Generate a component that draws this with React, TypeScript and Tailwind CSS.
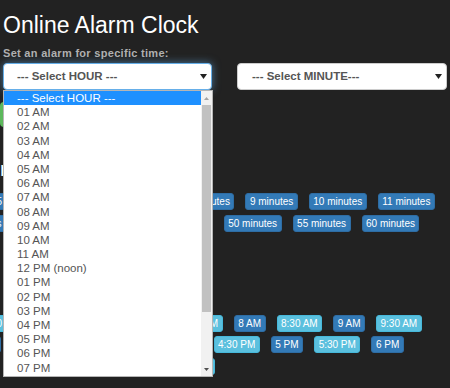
const hours = [
  "01 AM", "02 AM", "03 AM", "04 AM", "05 AM", "06 AM", "07 AM", "08 AM", "09 AM", "10 AM", "11 AM",
  "12 PM (noon)", "01 PM", "02 PM", "03 PM", "04 PM", "05 PM", "06 PM", "07 PM",
];

const minutesRow1 = ["5 minutes", "6 minutes", "7 minutes", "8 minutes", "9 minutes", "10 minutes", "11 minutes"];
const minutesRow2 = ["30 minutes", "35 minutes", "40 minutes", "45 minutes", "50 minutes", "55 minutes", "60 minutes"];
const timesRow1 = ["5:30 AM", "6 AM", "6:30 AM", "7 AM", "7:30 AM", "8 AM", "8:30 AM", "9 AM", "9:30 AM"];
const timesRow2 = ["2 PM", "2:30 PM", "3 PM", "3:30 PM", "4 PM", "4:30 PM", "5 PM", "5:30 PM", "6 PM"];
const timesRow3 = ["9 PM", "9:30 PM", "10 PM", "10:30 PM"];

function Caret() {
  return (
    <svg width="7" height="5" viewBox="0 0 7 5" className="shrink-0">
      <path d="M0 0h7L3.5 5z" fill="#222" />
    </svg>
  );
}

function Btn({ label, light }: { label: string; light?: boolean }) {
  return (
    <span
      className={
        light
          ? "shrink-0 h-[17px] rounded-[3px] border border-[#46b8da] bg-[#5bc0de] px-[3.5px] text-[10px] leading-[15px] text-white whitespace-nowrap"
          : "shrink-0 h-[17px] rounded-[3px] border border-[#2e6da4] bg-[#337ab7] px-[3.5px] text-[10px] leading-[15px] text-white whitespace-nowrap"
      }
    >
      {label}
    </span>
  );
}

function TimeRow({ items, className }: { items: string[]; className: string }) {
  return (
    <div className={"flex gap-[11px] " + className}>
      {items.map((t) => (
        <Btn key={t} label={t} light={t.includes(":30")} />
      ))}
    </div>
  );
}

export default function App() {
  return (
    <div className="h-[388px] w-[450px] overflow-hidden bg-[#222222] px-[3px] font-['Liberation_Sans',Arial,sans-serif]">
      {/* Header */}
      <h1 className="pt-[13px] text-[23px] leading-[25px] text-white">Online Alarm Clock</h1>
      <p className="mt-[8px] text-[11px] font-bold leading-[15px] tracking-[0.3px] text-[#b0b0b0]">
        Set an alarm for specific time:
      </p>

      {/* Selects */}
      <div className="mt-[2px] flex">
        <div className="relative w-[209px]">
          <div className="flex h-[27px] items-center justify-between rounded-[4px] border border-[#66afe9] bg-white pl-[13px] pr-[4px] shadow-[0_0_8px_rgba(102,175,233,0.6)]">
            <span className="text-[11.5px] font-bold text-[#555]">--- Select HOUR ---</span>
            <Caret />
          </div>

          {/* Open option list */}
          <div className="absolute left-0 top-[27px] z-10 flex h-[287px] w-[210px] overflow-hidden border border-[#b5b5b5] bg-white">
            <div className="flex-1">
              <div className="h-[14.2px] bg-[#1e90ff] pl-[13px] text-[11.5px] leading-[14.2px] text-white">
                --- Select HOUR ---
              </div>
              {hours.map((h) => (
                <div key={h} className="h-[14.2px] pl-[13px] text-[11.5px] leading-[14.2px] text-[#555]">
                  {h}
                </div>
              ))}
            </div>
            <div className="flex w-[11px] flex-col bg-[#f1f1f1]">
              <div className="flex h-[14px] items-center justify-center">
                <svg width="5" height="3" viewBox="0 0 5 3">
                  <path d="M0 3h5L2.5 0z" fill="#a3a3a3" />
                </svg>
              </div>
              <div className="mx-px h-[207px] bg-[#c1c1c1]" />
              <div className="flex-1" />
              <div className="flex h-[14px] items-center justify-center">
                <svg width="5" height="3" viewBox="0 0 5 3">
                  <path d="M0 0h5L2.5 3z" fill="#505050" />
                </svg>
              </div>
            </div>
          </div>
        </div>

        <div className="ml-[25px] flex h-[27px] flex-1 items-center justify-between rounded-[4px] border border-[#cccccc] bg-white pl-[14px] pr-[4px]">
          <span className="text-[11.5px] font-bold text-[#555]">--- Select MINUTE---</span>
          <Caret />
        </div>
      </div>

      {/* Content under the open list */}
      <div className="-ml-[3px] mt-[12px] h-[25px] w-[90px] rounded-[4px] bg-[#5cb85c]" />

      <h2 className="-ml-[3px] mt-[31px] text-[20px] leading-[22px] text-white">r</h2>

      <TimeRow items={minutesRow1} className="mt-[13px] ml-[-11px]" />
      <TimeRow items={minutesRow2} className="mt-[5px] ml-[-55px]" />

      <TimeRow items={timesRow1} className="mt-[83px] ml-[-25px]" />
      <TimeRow items={timesRow2} className="mt-[4px] ml-[-34px]" />
      <TimeRow items={timesRow3} className="mt-[5px] ml-[11px]" />
    </div>
  );
}
